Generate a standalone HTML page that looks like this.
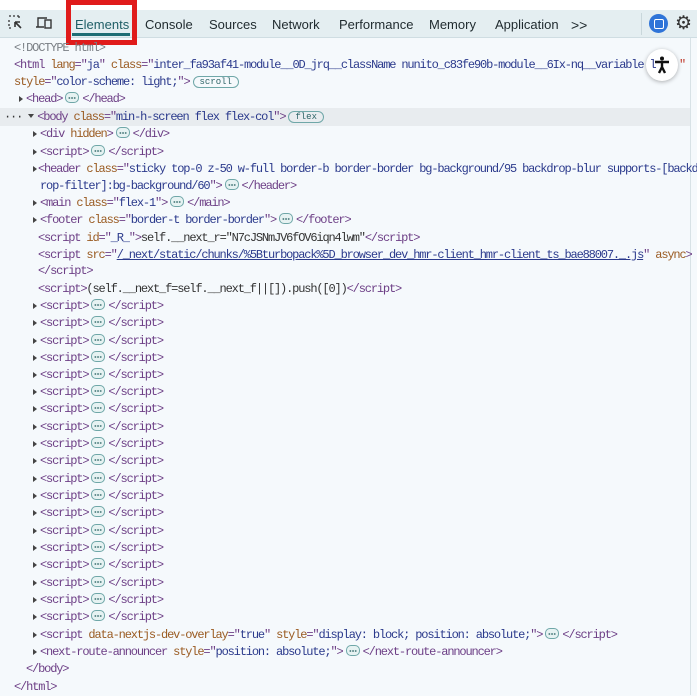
<!DOCTYPE html>
<html><head><style>
body{margin:0;width:697px;height:695px;background:#f5f9fc;position:relative;overflow:hidden;font-family:"Liberation Sans",sans-serif}
.top{position:absolute;left:0;top:0;width:697px;height:10px;background:#fff}
.bar{position:absolute;left:0;top:10px;width:697px;height:27px;background:#e4eef1;border-bottom:1px solid #cfdde2}
.tab{position:absolute;top:11px;height:27px;line-height:28px;font-size:13px;color:#1f2a2e}
.red{position:absolute;left:66px;top:0;width:61px;height:35px;border:5px solid #e01b1b}
.ul{position:absolute;left:72px;top:33px;width:58px;height:3px;background:#1f6d74}
.l{position:absolute;left:0;height:17px;line-height:17px;font-family:"Liberation Mono",monospace;font-size:12px;letter-spacing:-1.15px;white-space:pre;color:#6d3f86}
.t{color:#6d3f86}.a{color:#9a5b22}.v{color:#2b3a8c}.g{color:#7a7f85}.x{color:#333}
.tri{display:inline-block;width:0;height:0;border-left:4px solid #444;border-top:3.5px solid transparent;border-bottom:3.5px solid transparent;margin-right:3px;vertical-align:0}
.trd{display:inline-block;width:0;height:0;border-top:4px solid #444;border-left:3.5px solid transparent;border-right:3.5px solid transparent;margin-right:3px;vertical-align:2px}
.e{display:inline-block;width:12px;height:9px;border:1px solid #6fa7a8;border-radius:5px;background:#e6f2f2;vertical-align:-1px;margin:0 3px;position:relative;letter-spacing:0}
.e:after{content:"";position:absolute;left:2px;top:3.5px;width:8px;height:2px;background:radial-gradient(circle,#3a6f70 45%,transparent 50%) 0 0/2.7px 2px repeat-x}
.p{display:inline-block;font-family:"Liberation Mono",monospace;font-size:9px;letter-spacing:0;line-height:10px;padding:0 6px;border:1px solid #6fa7a8;border-radius:7px;color:#2e6467;vertical-align:1px;margin-left:3px}
u{text-decoration:underline;color:#2b3a8c}
</style></head><body>
<div class="top"></div>
<div class="bar"></div>
<svg style="position:absolute;left:8px;top:15px" width="16" height="16" viewBox="0 0 16 16"><path d="M1 1h2M5 1h2M9 1h2M1 5v2M1 9v2M1 13h2M11 1v2" stroke="#333" stroke-width="1.3" fill="none"/><path d="M7 7l6 6M7 7h5M7 7v5" stroke="#333" stroke-width="1.6" fill="none"/></svg>
<svg style="position:absolute;left:35px;top:15px" width="18" height="16" viewBox="0 0 18 16"><path d="M3 12V3h9M1 12h8" stroke="#333" stroke-width="1.4" fill="none"/><rect x="10" y="5" width="6" height="8" stroke="#333" stroke-width="1.4" fill="none"/></svg>
<div class="tab" style="left:75px;color:#1f5e66">Elements</div>
<div class="ul"></div>
<div class="red"></div>
<div class="tab" style="left:145px">Console</div>
<div class="tab" style="left:209px">Sources</div>
<div class="tab" style="left:272px">Network</div>
<div class="tab" style="left:339px">Performance</div>
<div class="tab" style="left:429px">Memory</div>
<div class="tab" style="left:495px">Application</div>
<div class="tab" style="left:571px;font-size:14px">&gt;&gt;</div>
<div style="position:absolute;left:641px;top:13px;width:1px;height:22px;background:#c9d7db"></div>
<div style="position:absolute;left:649px;top:14px;width:19px;height:19px;border-radius:50%;background:#2f74d8"><div style="position:absolute;left:5px;top:5px;width:8px;height:8px;border:1.5px solid #fff;border-radius:2px"></div></div>
<div style="position:absolute;left:675px;top:12px;font-size:19px;color:#333">⚙</div>
<div style="position:absolute;left:690px;top:38px;width:1px;height:657px;background:#d8e2e6"></div>
<div style="position:absolute;left:0;top:108px;width:690px;height:18px;background:#e8ecef"></div>
<div style="position:absolute;left:646px;top:49px;width:32px;height:32px;border-radius:50%;background:#fff;box-shadow:0 1px 4px rgba(0,0,0,.3)"></div>
<svg style="position:absolute;left:652px;top:55px" width="20" height="20" viewBox="0 0 20 20"><circle cx="10" cy="3.5" r="2" fill="#111"/><path d="M3 7h14M10 7v5M7 18l3-6 3 6" stroke="#111" stroke-width="2.4" fill="none"/></svg>

<div class="l g" style="top:40px;left:14px">&lt;!DOCTYPE html&gt;</div>
<div class="l" style="top:57px;left:14px"><span class="t">&lt;html</span> <span class="a">lang</span><span class="t">="</span><span class="v">ja</span><span class="t">"</span> <span class="a">class</span><span class="t">="</span><span class="v">inter_fa93af41-module__0D_jrq__className nunito_c83fe90b-module__6Ix-nq__variable l</span></div>
<div class="l" style="top:57px;left:679px;color:#c0392b">"</div>
<div class="l" style="top:74px;left:14px"><span class="a">style</span><span class="t">="</span><span class="v">color-scheme: light;</span><span class="t">"&gt;</span><span class="p">scroll</span></div>
<div class="l" style="top:91px;left:19px"><span class="tri"></span><span class="t">&lt;head&gt;</span><span class="e"></span><span class="t">&lt;/head&gt;</span></div>
<div class="l" style="top:109px;left:4px"><span class="x">···</span> <span class="trd"></span><span class="t">&lt;body</span> <span class="a">class</span><span class="t">="</span><span class="v">min-h-screen flex flex-col</span><span class="t">"&gt;</span><span class="p">flex</span></div>
<div class="l" style="top:126px;left:33px"><span class="tri"></span><span class="t">&lt;div</span> <span class="a">hidden</span><span class="t">&gt;</span><span class="e"></span><span class="t">&lt;/div&gt;</span></div>
<div class="l" style="top:144px;left:33px"><span class="tri"></span><span class="t">&lt;script&gt;</span><span class="e"></span><span class="t">&lt;/script&gt;</span></div>
<div class="l" style="top:161px;left:33px"><span class="tri" style="margin-right:1px"></span><span class="t">&lt;header</span> <span class="a">class</span><span class="t">="</span><span class="v">sticky top-0 z-50 w-full border-b border-border bg-background/95 backdrop-blur supports-[backd</span></div>
<div class="l" style="top:178px;left:40px"><span class="v">rop-filter]:bg-background/60</span><span class="t">"&gt;</span><span class="e"></span><span class="t">&lt;/header&gt;</span></div>
<div class="l" style="top:195px;left:33px"><span class="tri"></span><span class="t">&lt;main</span> <span class="a">class</span><span class="t">="</span><span class="v">flex-1</span><span class="t">"&gt;</span><span class="e"></span><span class="t">&lt;/main&gt;</span></div>
<div class="l" style="top:212px;left:33px"><span class="tri"></span><span class="t">&lt;footer</span> <span class="a">class</span><span class="t">="</span><span class="v">border-t border-border</span><span class="t">"&gt;</span><span class="e"></span><span class="t">&lt;/footer&gt;</span></div>
<div class="l" style="top:230px;left:38px"><span class="t">&lt;script</span> <span class="a">id</span><span class="t">="</span><span class="v">_R_</span><span class="t">"&gt;</span><span class="x">self.__next_r="N7cJSNmJV6fOV6iqn4lwm"</span><span class="t">&lt;/script&gt;</span></div>
<div class="l" style="top:247px;left:38px"><span class="t">&lt;script</span> <span class="a">src</span><span class="t">="</span><u>/_next/static/chunks/%5Bturbopack%5D_browser_dev_hmr-client_hmr-client_ts_bae88007._.js</u><span class="t">"</span> <span class="a">async</span><span class="t">&gt;</span></div>
<div class="l" style="top:263px;left:38px"><span class="t">&lt;/script&gt;</span></div>
<div class="l" style="top:281px;left:38px"><span class="t">&lt;script&gt;</span><span class="x">(self.__next_f=self.__next_f||[]).push([0])</span><span class="t">&lt;/script&gt;</span></div>
<div class="l" style="top:298px;left:33px"><span class="tri"></span><span class="t">&lt;script&gt;</span><span class="e"></span><span class="t">&lt;/script&gt;</span></div>
<div class="l" style="top:315px;left:33px"><span class="tri"></span><span class="t">&lt;script&gt;</span><span class="e"></span><span class="t">&lt;/script&gt;</span></div>
<div class="l" style="top:333px;left:33px"><span class="tri"></span><span class="t">&lt;script&gt;</span><span class="e"></span><span class="t">&lt;/script&gt;</span></div>
<div class="l" style="top:350px;left:33px"><span class="tri"></span><span class="t">&lt;script&gt;</span><span class="e"></span><span class="t">&lt;/script&gt;</span></div>
<div class="l" style="top:367px;left:33px"><span class="tri"></span><span class="t">&lt;script&gt;</span><span class="e"></span><span class="t">&lt;/script&gt;</span></div>
<div class="l" style="top:384px;left:33px"><span class="tri"></span><span class="t">&lt;script&gt;</span><span class="e"></span><span class="t">&lt;/script&gt;</span></div>
<div class="l" style="top:401px;left:33px"><span class="tri"></span><span class="t">&lt;script&gt;</span><span class="e"></span><span class="t">&lt;/script&gt;</span></div>
<div class="l" style="top:419px;left:33px"><span class="tri"></span><span class="t">&lt;script&gt;</span><span class="e"></span><span class="t">&lt;/script&gt;</span></div>
<div class="l" style="top:436px;left:33px"><span class="tri"></span><span class="t">&lt;script&gt;</span><span class="e"></span><span class="t">&lt;/script&gt;</span></div>
<div class="l" style="top:453px;left:33px"><span class="tri"></span><span class="t">&lt;script&gt;</span><span class="e"></span><span class="t">&lt;/script&gt;</span></div>
<div class="l" style="top:471px;left:33px"><span class="tri"></span><span class="t">&lt;script&gt;</span><span class="e"></span><span class="t">&lt;/script&gt;</span></div>
<div class="l" style="top:488px;left:33px"><span class="tri"></span><span class="t">&lt;script&gt;</span><span class="e"></span><span class="t">&lt;/script&gt;</span></div>
<div class="l" style="top:505px;left:33px"><span class="tri"></span><span class="t">&lt;script&gt;</span><span class="e"></span><span class="t">&lt;/script&gt;</span></div>
<div class="l" style="top:523px;left:33px"><span class="tri"></span><span class="t">&lt;script&gt;</span><span class="e"></span><span class="t">&lt;/script&gt;</span></div>
<div class="l" style="top:540px;left:33px"><span class="tri"></span><span class="t">&lt;script&gt;</span><span class="e"></span><span class="t">&lt;/script&gt;</span></div>
<div class="l" style="top:557px;left:33px"><span class="tri"></span><span class="t">&lt;script&gt;</span><span class="e"></span><span class="t">&lt;/script&gt;</span></div>
<div class="l" style="top:575px;left:33px"><span class="tri"></span><span class="t">&lt;script&gt;</span><span class="e"></span><span class="t">&lt;/script&gt;</span></div>
<div class="l" style="top:592px;left:33px"><span class="tri"></span><span class="t">&lt;script&gt;</span><span class="e"></span><span class="t">&lt;/script&gt;</span></div>
<div class="l" style="top:609px;left:33px"><span class="tri"></span><span class="t">&lt;script&gt;</span><span class="e"></span><span class="t">&lt;/script&gt;</span></div>
<div class="l" style="top:627px;left:33px"><span class="tri"></span><span class="t">&lt;script</span> <span class="a">data-nextjs-dev-overlay</span><span class="t">="</span><span class="v">true</span><span class="t">"</span> <span class="a">style</span><span class="t">="</span><span class="v">display: block; position: absolute;</span><span class="t">"&gt;</span><span class="e"></span><span class="t">&lt;/script&gt;</span></div>
<div class="l" style="top:644px;left:33px"><span class="tri"></span><span class="t">&lt;next-route-announcer</span> <span class="a">style</span><span class="t">="</span><span class="v">position: absolute;</span><span class="t">"&gt;</span><span class="e"></span><span class="t">&lt;/next-route-announcer&gt;</span></div>
<div class="l" style="top:661px;left:26px"><span class="t">&lt;/body&gt;</span></div>
<div class="l" style="top:679px;left:14px"><span class="t">&lt;/html&gt;</span></div>
</body></html>
